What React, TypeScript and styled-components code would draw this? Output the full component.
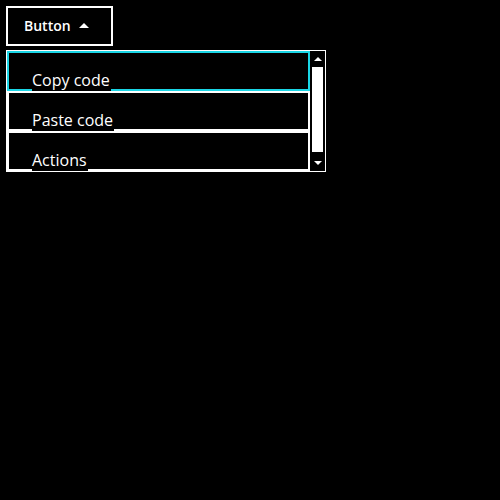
import React from 'react';
import styled, { createGlobalStyle } from 'styled-components';

const GlobalStyle = createGlobalStyle`
    html, body {
        margin: 0;
        padding: 0;
        background: #000000;
        color: #ffffff;
        font-family: 'Open Sans', 'Noto Sans', sans-serif;
    }
`

const Page = styled.div`
    padding: 6px;
    display: flex;
    flex-direction: column;
    align-items: flex-start;
    gap: 4px;
`

const MenuButton = styled.button`
    display: flex;
    align-items: center;
    gap: 8px;
    box-sizing: border-box;
    width: 107px;
    height: 40px;
    padding: 0 0 2px 16px;
    background: #000000;
    color: #ffffff;
    border: 2px solid #ffffff;
    border-radius: 0;
    font-family: inherit;
    font-size: 14px;
    font-weight: 600;
    cursor: pointer;
`

const Caret = styled.span`
    width: 0;
    height: 0;
    border-left: 5px solid transparent;
    border-right: 5px solid transparent;
    border-bottom: 5px solid #ffffff;
    margin-top: 1px;
`

const Menu = styled.div`
    display: flex;
    width: 320px;
    height: 122px;
    box-sizing: border-box;
    border: 1px solid #ffffff;
    overflow: hidden;
`

const List = styled.ul`
    flex: 1;
    list-style: none;
    margin: 0;
    padding: 0;
    overflow: hidden;
`

const Item = styled.li<{ $active?: boolean }>`
    display: flex;
    align-items: flex-end;
    box-sizing: border-box;
    height: 40px;
    padding-left: 23px;
    border: 2px solid ${p => (p.$active ? '#1ad6e6' : '#ffffff')};
    font-size: 16px;
    cursor: pointer;
`

const Label = styled.span`
    position: relative;
    background: #000000;
    line-height: 22px;
    margin-bottom: -2px;
    padding-right: 1px;
`

const Scrollbar = styled.div`
    width: 15px;
    display: flex;
    flex-direction: column;
    align-items: center;
    padding: 4px 0 6px;
    box-sizing: border-box;
`

const Arrow = styled.span<{ $down?: boolean }>`
    width: 0;
    height: 0;
    border-left: 4px solid transparent;
    border-right: 4px solid transparent;
    ${p => (p.$down ? 'border-top: 4px solid #ffffff;' : 'border-bottom: 4px solid #ffffff;')}
    margin: 2px 0;
`

const Track = styled.div`
    flex: 1;
    width: 100%;
    display: flex;
    justify-content: center;
    padding: 4px 0 7px;
    box-sizing: border-box;
`

const Thumb = styled.div`
    width: 11px;
    height: 85px;
    background: #ffffff;
`

const items = ['Copy code', 'Paste code', 'Actions'];

const App: React.FunctionComponent = () => {
    return (
        <Page>
            <GlobalStyle />
            <MenuButton>
                <span>Button</span>
                <Caret />
            </MenuButton>
            <Menu>
                <List>
                    {items.map((label, i) => (
                        <Item key={label} $active={i === 0}>
                            <Label>{label}</Label>
                        </Item>
                    ))}
                </List>
                <Scrollbar>
                    <Arrow />
                    <Track>
                        <Thumb />
                    </Track>
                    <Arrow $down />
                </Scrollbar>
            </Menu>
        </Page>
    )
}

export default App;
